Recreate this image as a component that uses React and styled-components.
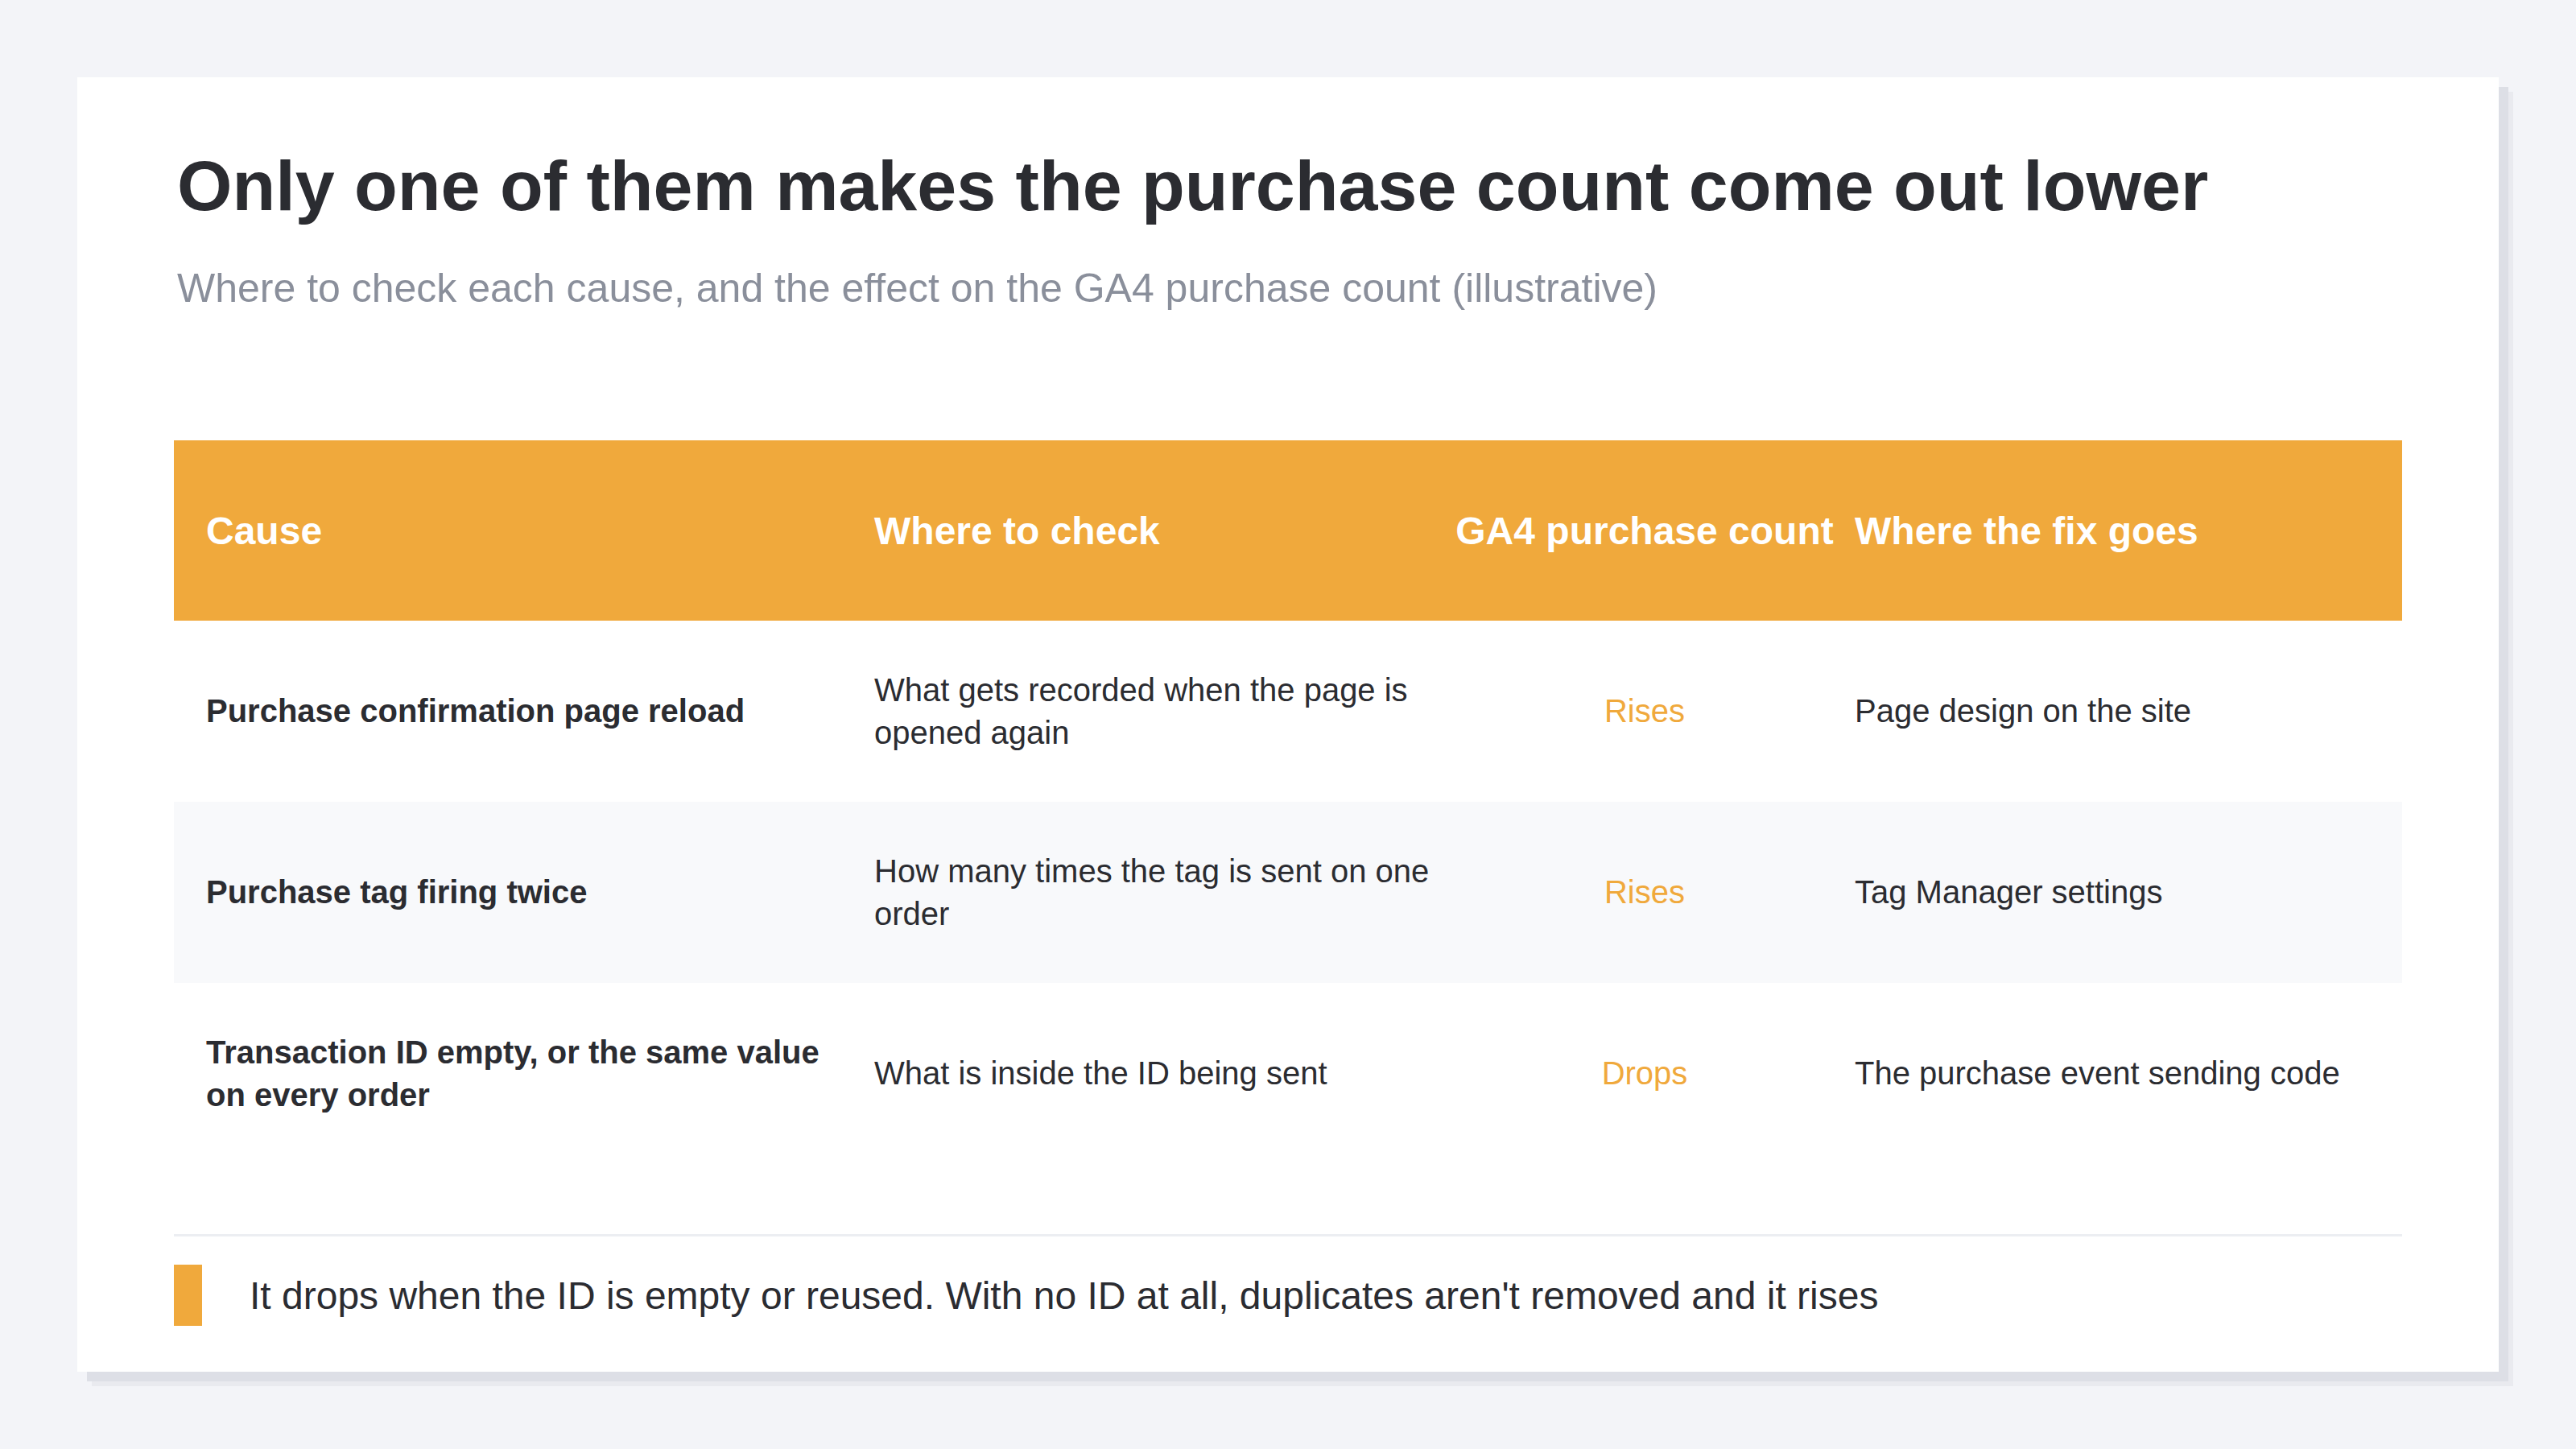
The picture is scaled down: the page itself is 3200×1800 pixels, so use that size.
import React from 'react';
import styled, { createGlobalStyle } from 'styled-components';

const rows = [
  {
    cause: 'Purchase confirmation page reload',
    check: 'What gets recorded when the page is opened again',
    effect: 'Rises',
    fix: 'Page design on the site',
  },
  {
    cause: 'Purchase tag firing twice',
    check: 'How many times the tag is sent on one order',
    effect: 'Rises',
    fix: 'Tag Manager settings',
  },
  {
    cause: 'Transaction ID empty, or the same value on every order',
    check: 'What is inside the ID being sent',
    effect: 'Drops',
    fix: 'The purchase event sending code',
  },
];

function App() {
  return (
    <>
      <GlobalStyle />
      <Page>
        <Card>
          <Title>Only one of them makes the purchase count come out lower</Title>
          <Subtitle>
            Where to check each cause, and the effect on the GA4 purchase count (illustrative)
          </Subtitle>
          <Table>
            <HeadRow>
              <HeadCell>Cause</HeadCell>
              <HeadCell>Where to check</HeadCell>
              <HeadCell centered>GA4 purchase count</HeadCell>
              <HeadCell>Where the fix goes</HeadCell>
            </HeadRow>
            {rows.map((row, i) => (
              <BodyRow key={row.cause} striped={i % 2 === 1}>
                <CauseCell>{row.cause}</CauseCell>
                <Cell>{row.check}</Cell>
                <EffectCell>{row.effect}</EffectCell>
                <Cell>{row.fix}</Cell>
              </BodyRow>
            ))}
          </Table>
          <Divider />
          <Note>
            <NoteMark />
            <NoteText>
              It drops when the ID is empty or reused. With no ID at all, duplicates aren't removed and it rises
            </NoteText>
          </Note>
        </Card>
      </Page>
    </>
  );
}

const GlobalStyle = createGlobalStyle`
  body {
    margin: 0;
    background: #f3f4f8;
    font-family: "Liberation Sans", Arial, Helvetica, sans-serif;
    color: #2b2c31;
  }
`;

const Page = styled.div`
  padding: 96px;
`;

const Card = styled.div`
  width: 3008px;
  box-sizing: border-box;
  background: #ffffff;
  padding: 84px 120px 57px;
  box-shadow: 12px 12px 0 #dddfe6, 18px 18px 0 #e9eaef;
`;

const Title = styled.h1`
  margin: 0 0 0 4px;
  font-size: 88px;
  line-height: 1.15;
  font-weight: 700;
  color: #2b2c31;
`;

const Subtitle = styled.p`
  margin: 45px 0 0 4px;
  font-size: 50px;
  line-height: 1.3;
  color: #8a8f9b;
`;

const Table = styled.div`
  margin-top: 156px;
  display: flex;
  flex-direction: column;
`;

const Row = styled.div`
  display: grid;
  grid-template-columns: 830px 776px 442px 720px;
`;

const HeadRow = styled(Row)`
  height: 224px;
  background: #f0a93c;
`;

const BodyRow = styled(Row)`
  height: 225px;
  background: ${({ striped }) => (striped ? '#f8f9fb' : '#ffffff')};
`;

const HeadCell = styled.div`
  display: flex;
  align-items: center;
  justify-content: ${({ centered }) => (centered ? 'center' : 'flex-start')};
  padding: ${({ centered }) => (centered ? '0' : '0 20px 0 40px')};
  font-size: 48px;
  font-weight: 700;
  color: #ffffff;
  white-space: nowrap;
`;

const Cell = styled.div`
  display: flex;
  align-items: center;
  box-sizing: border-box;
  padding: 0 20px 0 40px;
  font-size: 40px;
  line-height: 1.33;
  color: #2b2c31;
`;

const CauseCell = styled(Cell)`
  font-weight: 700;
`;

const EffectCell = styled(Cell)`
  justify-content: center;
  padding: 0;
  color: #f0a93c;
`;

const Divider = styled.div`
  margin-top: 87px;
  height: 3px;
  background: #eceef2;
`;

const Note = styled.div`
  margin-top: 35px;
  display: flex;
  align-items: center;
  gap: 59px;
`;

const NoteMark = styled.div`
  width: 35px;
  height: 76px;
  background: #f0a93c;
`;

const NoteText = styled.div`
  font-size: 48px;
  color: #2b2c31;
`;

export default App;
